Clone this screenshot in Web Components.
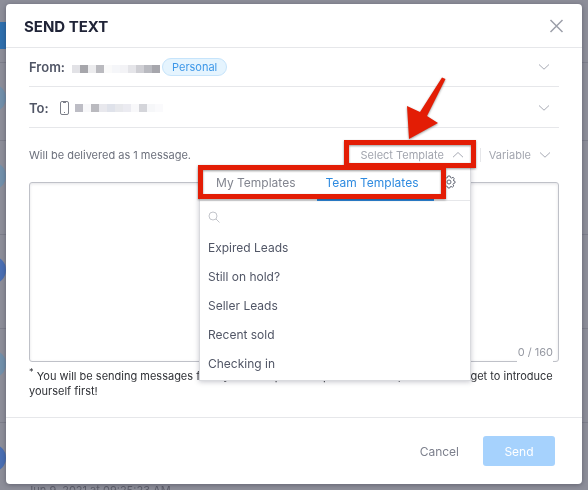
<!DOCTYPE html>
<html lang="en">
<head>
<meta charset="utf-8">
<title>Send Text</title>
<style>
	body {
		margin: 0;
		min-height: 100vh;
		font-family: Inter, Roboto, "Liberation Sans", sans-serif;
		color: #515666;
		background: #8d8e99;
	}
</style>
</head>
<body>
<send-text-page></send-text-page>
<script>
const chevronDown = `<svg width="12" height="8" viewBox="0 0 12 8" fill="none" stroke="#a8abb5" aria-hidden="true"><path d="M1 1.5L6 6.2L11 1.5"/></svg>`;
const chevronUp = `<svg width="12" height="8" viewBox="0 0 12 8" fill="none" stroke="#a8abb5" aria-hidden="true"><path d="M1 6.2L6 1.5L11 6.2"/></svg>`;

// The dimmed activity list behind the dialog.
class ActivityList extends HTMLElement {
	connectedCallback() {
		let shadow = this.attachShadow({mode: "open"});
		let dates = ["", "", "", "", "Jun 9, 2021 at 09:25:23 AM"];
		let colors = ["#7290ab", "#7290ab", "#4a6fb3", "#7290ab", "#4a6fb3"];
		shadow.innerHTML = `
			<style>
				:host {
					display: flex;
					flex-direction: column;
					position: fixed;
					inset: 0;
					overflow: hidden;
					font-size: 11px;
					color: #5f606c;
				}
				header {
					flex: none;
					display: flex;
					align-items: center;
					height: 62px;
					padding-top: 8px;
					box-sizing: border-box;
				}
				.tab {
					width: 32px;
					height: 27px;
					background: #2f70ae;
				}
				.row {
					flex: none;
					display: flex;
					flex-direction: column;
					gap: 11px;
					height: 94px;
					box-sizing: border-box;
					padding-top: 21px;
					border-top: 1px solid #7e7f8b;
				}
				.row:nth-of-type(1) {
					height: 78px;
				}
				.dot {
					width: 28px;
					height: 28px;
					margin-left: -22px;
					border-radius: 50%;
				}
				.date {
					padding-left: 27px;
				}
			</style>
			<header><span class="tab"></span></header>
			${dates.map((d, i) => `<div class="row"><span class="dot" style="background:${colors[i]}"></span><span class="date">${d}</span></div>`).join("")}
		`;
	}
}
customElements.define("activity-list", ActivityList);

// White box with a header, a body (default slot) and a footer slot.
class ModalDialog extends HTMLElement {
	connectedCallback() {
		let shadow = this.attachShadow({mode: "open"});
		shadow.innerHTML = `
			<style>
				:host {
					display: flex;
					flex-direction: column;
					background: #fff;
					border-radius: 4px;
					box-shadow: 0 1px 5px rgba(20, 20, 40, 0.35);
				}
				header {
					display: flex;
					align-items: center;
					justify-content: space-between;
					height: 43px;
					padding: 0 18px;
					border-bottom: 1px solid #e6e7ea;
				}
				h1 {
					margin: 0;
					padding-top: 2px;
					font-size: 15px;
					line-height: 20px;
					font-weight: 700;
					color: #202437;
				}
				button {
					display: flex;
					padding: 0;
					border: 0;
					background: none;
					cursor: pointer;
				}
				main {
					padding: 0 23px 18px;
				}
				footer {
					display: flex;
					justify-content: flex-end;
					gap: 24px;
					padding: 18px 27px;
					border-top: 1px solid #e6e7ea;
				}
			</style>
			<header>
				<h1></h1>
				<button aria-label="Close"><svg width="15" height="14" viewBox="0 0 15 14" fill="none" stroke="#9c9fa9" stroke-width="1.5"><path d="M1.5 1L13.5 13M13.5 1L1.5 13"/></svg></button>
			</header>
			<main><slot></slot></main>
			<footer><slot name="footer"></slot></footer>
		`;
		shadow.querySelector("h1").textContent = this.getAttribute("heading");
	}
}
customElements.define("modal-dialog", ModalDialog);

class FieldRow extends HTMLElement {
	connectedCallback() {
		let shadow = this.attachShadow({mode: "open"});
		let label = this.getAttribute("label");
		shadow.innerHTML = `
			<style>
				:host {
					display: flex;
					align-items: center;
					box-sizing: border-box;
					height: 41px;
					padding-top: 1px;
					border-bottom: 1px solid #e6e7ea;
				}
				.label {
					font-size: 13px;
					font-weight: 600;
				}
				.value {
					display: flex;
					align-items: center;
					flex: 1;
				}
				button {
					display: flex;
					padding: 4px 9px;
					border: 0;
					background: none;
					cursor: pointer;
				}
			</style>
			<span class="label">${label}:</span>
			<span class="value"><slot></slot></span>
			<button aria-label="Change ${label}">${chevronDown}</button>
		`;
	}
}
customElements.define("field-row", FieldRow);

// A pixelated strip that stands for a hidden name or number.
// colors: space separated, one for each block.
class MaskedText extends HTMLElement {
	connectedCallback() {
		let shadow = this.attachShadow({mode: "open"});
		shadow.innerHTML = `
			<style>
				:host {
					display: flex;
				}
				span {
					width: 8px;
					height: 8px;
				}
			</style>
		`;
		for (let color of this.getAttribute("colors").split(" ")) {
			let block = document.createElement("span");
			block.style.background = color;
			shadow.appendChild(block);
		}
	}
}
customElements.define("masked-text", MaskedText);

class TagPill extends HTMLElement {
	connectedCallback() {
		let shadow = this.attachShadow({mode: "open"});
		shadow.innerHTML = `
			<style>
				:host {
					display: block;
					padding: 0 9px;
					border: 1px solid #c6e4fb;
					border-radius: 9px;
					background: #e5f4fe;
					color: #3d97e8;
					font-size: 11px;
					line-height: 16px;
				}
			</style>
			<slot></slot>
		`;
	}
}
customElements.define("tag-pill", TagPill);

class TemplateMenu extends HTMLElement {
	connectedCallback() {
		let shadow = this.attachShadow({mode: "open"});
		let items = ["Expired Leads", "Still on hold?", "Seller Leads", "Recent sold", "Checking in"];
		shadow.innerHTML = `
			<style>
				:host {
					display: block;
					box-sizing: border-box;
					background: #fff;
					border: 1px solid #d9dade;
					box-shadow: 0 1px 5px rgba(30, 30, 60, 0.25);
				}
				button {
					padding: 0;
					border: 0;
					background: none;
					font: inherit;
					color: inherit;
					cursor: pointer;
				}
				.tabs {
					display: flex;
					height: 32px;
					border-bottom: 1px solid #e6e7ea;
					font-size: 12px;
					color: #82858f;
				}
				.tabs [role=tab] {
					flex: 1;
					box-sizing: border-box;
					margin-bottom: -1px;
					padding: 0 8px 2px;
					border-bottom: 2px solid transparent;
					text-align: left;
				}
				.tabs [role=tab]:first-child {
					flex: none;
					padding: 0 22px 2px 16px;
				}
				.tabs [aria-selected=true] {
					color: #2f8be0;
					border-color: #2f8be0;
				}
				.tabs .settings {
					display: flex;
					align-items: center;
					width: 36px;
					padding: 0 0 4px 8px;
				}
				label {
					display: flex;
					align-items: center;
					gap: 6px;
					height: 32px;
					padding: 0 8px;
				}
				input {
					flex: 1;
					min-width: 0;
					border: 0;
					outline: 0;
					font: inherit;
					font-size: 12px;
				}
				ul {
					margin: 0;
					padding: 0 0 2px;
					list-style: none;
				}
				li button {
					width: 100%;
					padding: 0 8px;
					text-align: left;
					font-size: 12px;
					line-height: 29px;
				}
			</style>
			<div class="tabs" role="tablist">
				<button role="tab" aria-selected="false">My Templates</button>
				<button role="tab" aria-selected="true">Team Templates</button>
				<button class="settings" aria-label="Manage templates">
					<svg width="14" height="14" viewBox="0 0 14 14" fill="none" stroke="#676b78" stroke-linejoin="round">
						<path d="M5.9 1H8.1L8.5 2.6L9.7 3.1L11.1 2.2L12.3 3.8L11.4 5L11.8 6L13 6.3V8L11.5 8.4L11 9.5L11.8 11L10.3 12.2L9.1 11.4L8.2 11.8L7.8 13H6L5.6 11.7L4.5 11.2L3.2 12L1.9 10.6L2.7 9.4L2.3 8.4L1 8V6L2.5 5.6L2.9 4.6L2.1 3.4L3.4 2.1L4.6 2.9L5.5 2.6Z"/>
						<circle cx="7" cy="7" r="2"/>
					</svg>
				</button>
			</div>
			<label>
				<svg width="12" height="12" viewBox="0 0 12 12" fill="none" stroke="#c3c5cb"><circle cx="5" cy="5" r="4"/><path d="M8 8L11.5 11.5"/></svg>
				<input type="text" aria-label="Search templates">
			</label>
			<ul>${items.map(x => `<li><button>${x}</button></li>`).join("")}</ul>
		`;
	}
}
customElements.define("template-menu", TemplateMenu);

// Red frames and arrow that point out the template controls.
class CalloutMarks extends HTMLElement {
	connectedCallback() {
		let shadow = this.attachShadow({mode: "open"});
		shadow.innerHTML = `
			<style>
				:host {
					display: block;
					pointer-events: none;
				}
				svg {
					display: block;
					overflow: visible;
					filter: drop-shadow(0 1px 1px rgba(0, 0, 0, 0.4));
				}
			</style>
			<svg width="278" height="124" viewBox="198 77 278 124" aria-hidden="true">
				<g fill="none" stroke="#e31d05" stroke-width="5">
					<rect x="346.5" y="142.5" width="127" height="23"/>
					<rect x="200.5" y="167.5" width="243" height="29"/>
				</g>
				<path fill="#e31d05" d="M442 77.5L445.5 79L427 116L438 123L409 139L407 106L420 112Z"/>
			</svg>
		`;
	}
}
customElements.define("callout-marks", CalloutMarks);

class MessageEditor extends HTMLElement {
	connectedCallback() {
		let shadow = this.attachShadow({mode: "open"});
		shadow.innerHTML = `
			<style>
				:host {
					display: block;
				}
				.bar {
					position: relative;
					display: flex;
					align-items: center;
					height: 54px;
					font-size: 11px;
				}
				.count {
					flex: 1;
					color: #6c707c;
				}
				.bar button {
					display: flex;
					align-items: center;
					gap: 8px;
					padding: 0 8px;
					border: 0;
					background: none;
					font: inherit;
					color: #a3a6af;
					cursor: pointer;
				}
				.bar button + button {
					margin-left: 8px;
					border-left: 1px solid #e6e7ea;
				}
				template-menu {
					position: absolute;
					top: 39px;
					right: 88px;
					width: 272px;
					z-index: 1;
				}
				callout-marks {
					position: absolute;
					top: -51px;
					right: 83px;
					z-index: 2;
				}
				.box {
					position: relative;
				}
				textarea {
					display: block;
					width: 100%;
					height: 180px;
					box-sizing: border-box;
					padding: 8px;
					border: 1px solid #bfc1c8;
					border-radius: 3px;
					box-shadow: inset 0 1px 3px rgba(30, 30, 60, 0.12);
					resize: none;
					font: inherit;
					font-size: 12px;
				}
				.limit {
					position: absolute;
					right: 6px;
					bottom: 0;
					padding-left: 1px;
					background: #fff;
					font-size: 11px;
					line-height: 20px;
					color: #9699a2;
				}
				p {
					margin: 7px 0 0;
					font-size: 11px;
					line-height: 15px;
					color: #2f3136;
				}
				sup {
					line-height: 0;
				}
			</style>
			<div class="bar">
				<span class="count">Will be delivered as 1 message.</span>
				<button aria-expanded="true">Select Template ${chevronUp}</button>
				<button>Variable ${chevronDown}</button>
				<template-menu></template-menu>
				<callout-marks></callout-marks>
			</div>
			<div class="box">
				<textarea aria-label="Message"></textarea>
				<span class="limit">0 / 160</span>
			</div>
			<p><sup>*</sup> You will be sending messages from your own personal phone number, and don’t forget to introduce yourself first!</p>
		`;
	}
}
customElements.define("message-editor", MessageEditor);

class SendTextPage extends HTMLElement {
	connectedCallback() {
		let shadow = this.attachShadow({mode: "open"});
		shadow.innerHTML = `
			<style>
				:host {
					display: block;
					padding: 4px 6px 6px;
				}
				modal-dialog {
					position: relative;
				}
				field-row:first-of-type {
					height: 39px;
					padding: 0;
				}
				masked-text {
					margin: 3px 2px 0 7px;
				}
				.phone {
					margin-left: 11px;
				}
				.phone + masked-text {
					margin: 0 0 0 6px;
				}
				button {
					height: 30px;
					padding: 0;
					border: 0;
					border-radius: 3px;
					background: none;
					font: inherit;
					font-size: 12px;
					color: #7d808d;
					cursor: pointer;
				}
				.send {
					width: 72px;
					background: #a6d2fd;
					color: #fff;
				}
			</style>
			<activity-list></activity-list>
			<modal-dialog heading="SEND TEXT">
				<field-row label="From">
					<masked-text colors="#e2e2e6 #a6a6ab #ececee #bababf #fafafa #f5f6f9 #f3f3f6 #e5e5e9 #cfcfd4 #b9bac0 #a6a6ac"></masked-text>
					<tag-pill>Personal</tag-pill>
				</field-row>
				<field-row label="To">
					<svg class="phone" width="9" height="14" viewBox="0 0 9 14" fill="none" stroke="#7b7e88" aria-hidden="true"><rect x="0.5" y="0.5" width="8" height="13" rx="1.5"/><path d="M3 1.5H6M4 11.5H5"/></svg>
					<masked-text colors="#bdbdc5 #f8f8fa #bababf #e8e8ed #dfe2ea #e7e8ec #ebebf1 #f8f8fa #d4d5da #f6f7f9 #fafafc"></masked-text>
				</field-row>
				<message-editor></message-editor>
				<button slot="footer">Cancel</button>
				<button slot="footer" class="send">Send</button>
			</modal-dialog>
		`;
	}
}
customElements.define("send-text-page", SendTextPage);
</script>
</body>
</html>
